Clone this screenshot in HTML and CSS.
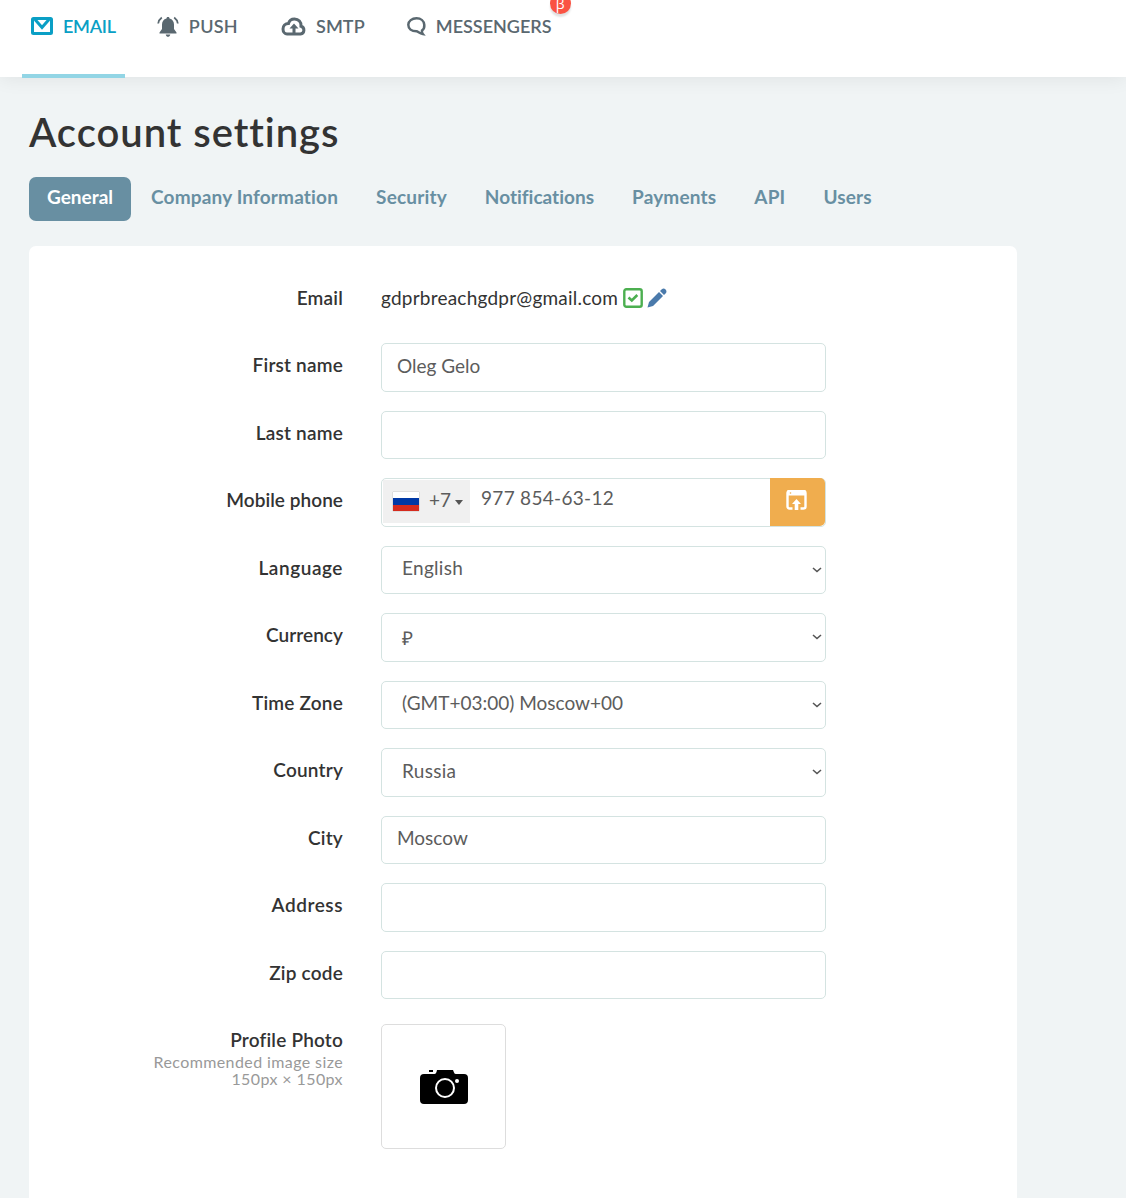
FILE: index.html
```html
<!DOCTYPE html>
<html lang="en">
<head>
<meta charset="utf-8">
<title>Account settings</title>
<link rel="stylesheet" href="styles.css">
</head>
<body>
<header class="topbar">
  <nav class="services">
    <a class="service service-active"><svg class="icon-mail" width="22" height="18" viewBox="0 0 22 18"><rect x="1.5" y="1.5" width="19" height="15" rx="1" fill="none" stroke="currentColor" stroke-width="3"/><path d="M4 2.5L11 10.5L18 2.5" fill="none" stroke="currentColor" stroke-width="3"/></svg><span>EMAIL</span></a>
    <a class="service"><svg class="icon-bell" width="22" height="21" viewBox="0 0 22 21"><path d="M11 1C9.800 1 9.500 1.700 9.500 2.400C6.500 3 5 5.500 5 8.500V13L2.500 16.500V17.500H19.500V16.500L17 13V8.500C17 5.500 15.500 3 12.500 2.400C12.500 1.700 12.200 1 11 1ZM8.700 18.500H13.300C13 20 12 20.800 11 20.800S9 20 8.700 18.500Z" fill="currentColor"/><path d="M4.800 1.500C2.800 3 1.500 5 1.200 7.500M17.200 1.500C19.200 3 20.500 5 20.800 7.500" fill="none" stroke="currentColor" stroke-width="1.800"/></svg><span>PUSH</span></a>
    <a class="service"><svg class="icon-cloud" width="25" height="19" viewBox="0 0 25 19"><path d="M6 17H19.500A4 4 0 0 0 20 9.200C20.500 5 17.500 2 13.500 2C10.500 2 8.200 3.700 7.500 6.500C4.200 6.500 2 8.800 2 12C2 15 4 17 6 17Z" fill="none" stroke="currentColor" stroke-width="3"/><path d="M13 6.500L17.500 11.500H14.500V17H11.500V11.500H8.500Z" fill="currentColor"/></svg><span>SMTP</span></a>
    <a class="service"><svg class="icon-chat" width="19" height="19" viewBox="0 0 19 19"><path d="M15 13.500C17 12 17.500 10 17.300 7.800C17 4 14 1.300 9.500 1.300S1.300 4 1.300 7.800S4.500 14.300 9.500 14.300C11 14.300 12.500 16.500 15.800 17C15 16 14.800 14.800 15 13.500Z" fill="none" stroke="currentColor" stroke-width="2.500"/></svg><span>MESSENGERS</span><b class="beta">β</b></a>
  </nav>
</header>
<main class="page">
  <h1 class="title">Account settings</h1>
  <nav class="tabs">
    <a class="tab tab-active">General</a>
    <a class="tab">Company Information</a>
    <a class="tab">Security</a>
    <a class="tab tab-tight">Notifications</a>
    <a class="tab">Payments</a>
    <a class="tab">API</a>
    <a class="tab">Users</a>
  </nav>
  <form class="card">
    <div class="row"><div class="label">Email</div><div class="email"><span>gdprbreachgdpr@gmail.com</span><svg class="icon-check" width="20" height="20" viewBox="0 0 20 20"><rect x="1.300" y="1.300" width="17.400" height="17.400" rx="2" fill="none" stroke="#4caf50" stroke-width="2.400"/><path d="M5.500 9.500L8.800 12.500L14.300 7" fill="none" stroke="#4caf50" stroke-width="2.600"/></svg><svg class="icon-pencil" width="20" height="20" viewBox="0 0 20 20"><path d="M0.500 19.500L2 14L12 4L16 8L6 18ZM13 3L14.800 1.200Q16.700-.3 18.600 1.400Q20.200 3.300 18.800 5.200L17 7Z" fill="#4a7aab"/></svg></div></div>
    <div class="row"><div class="label">First name</div><div class="control"><span>Oleg Gelo</span></div></div>
    <div class="row"><div class="label">Last name</div><div class="control"></div></div>
    <div class="row"><div class="label label-tight">Mobile phone</div><div class="control phone"><div class="dial"><i class="flag"></i><span>+7</span><i class="caret"></i></div><span class="number">977 854-63-12</span><div class="confirm"><svg width="21" height="20" viewBox="0 0 21 20"><path d="M6.500 18.500H3.500Q1.500 18.500 1.500 16.500V3Q1.500 1 3.500 1H17.500Q19.500 1 19.500 3V16.500Q19.500 18.500 17.500 18.500H14.500" fill="none" stroke="#fff" stroke-width="2.400"/><path d="M1 2Q1 0 3 0H18Q20 0 20 2V5.500H1Z" fill="#fff"/><path d="M10.500 9L15 14H12.300V20H8.700V14H6Z" fill="#fff"/><circle cx="4.500" cy="3" r=".8" fill="#f0ad4e"/></svg></div></div></div>
    <div class="row"><div class="label label-wide">Language</div><div class="control select"><span>English</span><svg class="chevron" width="10" height="6" viewBox="0 0 10 6"><path d="M1 1L5 4.500L9 1" fill="none" stroke="#555" stroke-width="1.600"/></svg></div></div>
    <div class="row"><div class="label label-tight">Currency</div><div class="control select"><span class="ruble">₽</span><svg class="chevron" width="10" height="6" viewBox="0 0 10 6"><path d="M1 1L5 4.500L9 1" fill="none" stroke="#555" stroke-width="1.600"/></svg></div></div>
    <div class="row"><div class="label">Time Zone</div><div class="control select"><span class="zone">(GMT+03:00) Moscow+00</span><svg class="chevron" width="10" height="6" viewBox="0 0 10 6"><path d="M1 1L5 4.500L9 1" fill="none" stroke="#555" stroke-width="1.600"/></svg></div></div>
    <div class="row"><div class="label">Country</div><div class="control select"><span>Russia</span><svg class="chevron" width="10" height="6" viewBox="0 0 10 6"><path d="M1 1L5 4.500L9 1" fill="none" stroke="#555" stroke-width="1.600"/></svg></div></div>
    <div class="row"><div class="label">City</div><div class="control"><span>Moscow</span></div></div>
    <div class="row"><div class="label label-wide">Address</div><div class="control"></div></div>
    <div class="row"><div class="label">Zip code</div><div class="control"></div></div>
    <div class="row"><div class="label">Profile Photo<small class="hint">Recommended image size<br>150px × 150px</small></div><div class="photo"><svg width="48" height="34" viewBox="0 0 48 34"><path d="M4 4H14.500Q16 4 16.500 2L17 0H33L34 2.500Q34.500 4 36 4H44Q48 4 48 8V30Q48 34 44 34H4Q0 34 0 30V8Q0 4 4 4ZM9 0H13V2H9Z"/><circle cx="25" cy="18" r="9" fill="none" stroke="#fff" stroke-width="2"/><circle cx="37" cy="11" r="2" fill="#fff"/></svg></div></div>
  </form>
</main>
</body>
</html>
```
FILE: styles.css
```css
* { box-sizing: border-box; }
body { margin: 0; min-height: 1198px; background: #f0f4f5; color: #333; font-family: Lato, "Open Sans", sans-serif; font-size: 19px; line-height: 24px; font-variant-ligatures: none; overflow-x: hidden; }
svg { display: block; flex: none; }
.topbar { height: 77px; background: #fff; box-shadow: 0 2px 18px rgba(0, 0, 0, .07); }
.services { display: flex; padding-left: 22px; gap: 24px; }
.service { position: relative; display: flex; align-items: center; height: 78px; padding: 0 9px 26px; gap: 10px; color: #5a6870; font-size: 18px; font-weight: 600; }
.service:nth-child(2) { margin-left: -1px; letter-spacing: .3px; }
.service:nth-child(3) { margin-left: 1px; letter-spacing: .1px; }
.service-active { color: #0a9fc5; border-bottom: 4px solid #92d5e5; padding-bottom: 22px; letter-spacing: -.25px; }
.beta { position: absolute; right: -10px; top: -7px; width: 21px; height: 21px; border-radius: 50%; background: #fa5343; color: #fff; font: 14px/21px "Open Sans", sans-serif; text-align: center; box-shadow: 0 3px 2px rgba(0, 0, 0, .12); }
.page { padding: 31px 109px 0 29px; }
.title { margin: 0 0 21px; font-size: 40px; line-height: 48px; font-weight: 600; letter-spacing: .95px; }
.tabs { display: flex; gap: 2px; height: 44px; margin-bottom: 25px; }
.tab { padding: 8px 18px 0; border-radius: 7px; color: #688fa2; font-weight: 700; letter-spacing: .17px; }
.tab-active { background: #688fa2; color: #fff; letter-spacing: 0; }
.tab-tight { letter-spacing: 0; }
.card { background: #fff; border-radius: 7px; min-height: 960px; padding-top: 29.5px; }
.row { display: grid; grid-template-columns: 314px 445px; column-gap: 38px; height: 48.5px; margin-bottom: 19px; }
.label { text-align: right; font-weight: 600; padding-top: 10px; letter-spacing: .2px; }
.label-tight { letter-spacing: .05px; }
.label-wide { letter-spacing: .55px; }
.email { display: flex; align-items: center; padding-bottom: 4px; letter-spacing: .22px; }
.icon-check { margin-left: 5px; }
.icon-pencil { margin-left: 4px; }
.control { display: flex; align-items: center; border: 1px solid #d4e3e1; border-radius: 5px; padding: 0 15px 3px; color: #5c5c5c; background: #fff; }
.select { padding-left: 20px; padding-right: 3px; justify-content: space-between; }
.select span { letter-spacing: .3px; }
.select .zone { letter-spacing: 0; }
.chevron { margin-top: 3px; }
.ruble { padding-top: 4px; }
.phone { padding: 0; align-items: stretch; }
.dial { display: flex; align-items: center; width: 87px; margin: 1px 0 3px 1px; padding-left: 10px; background: #f0f0f0; }
.dial span { margin-top: -3px; }
.flag { width: 26px; height: 19px; margin: 1px 10px 0 0; background: linear-gradient(#fff 33%, #0039a6 34% 66%, #d52b1e 67%); box-shadow: 0 0 1px #888; }
.caret { margin: 3px 0 0 4px; border: 4px solid transparent; border-top: 5px solid #555; border-bottom: 0; }
.number { flex: 1; padding: 7px 0 0 11px; letter-spacing: .3px; }
.confirm { display: flex; justify-content: center; width: 55px; margin: -1px 0 0; padding: 12px 2px 0 0; background: #f0ad4e; border-radius: 0 5px 5px 0; }
.hint { display: block; padding-top: 1px; font-size: 16px; line-height: 17px; font-weight: 400; color: #999; letter-spacing: .4px; }
.photo { display: flex; align-items: center; justify-content: center; width: 125px; height: 125px; margin-top: 5.500px; padding-top: 2px; border: 1px solid #ddd; border-radius: 5px; }
```
